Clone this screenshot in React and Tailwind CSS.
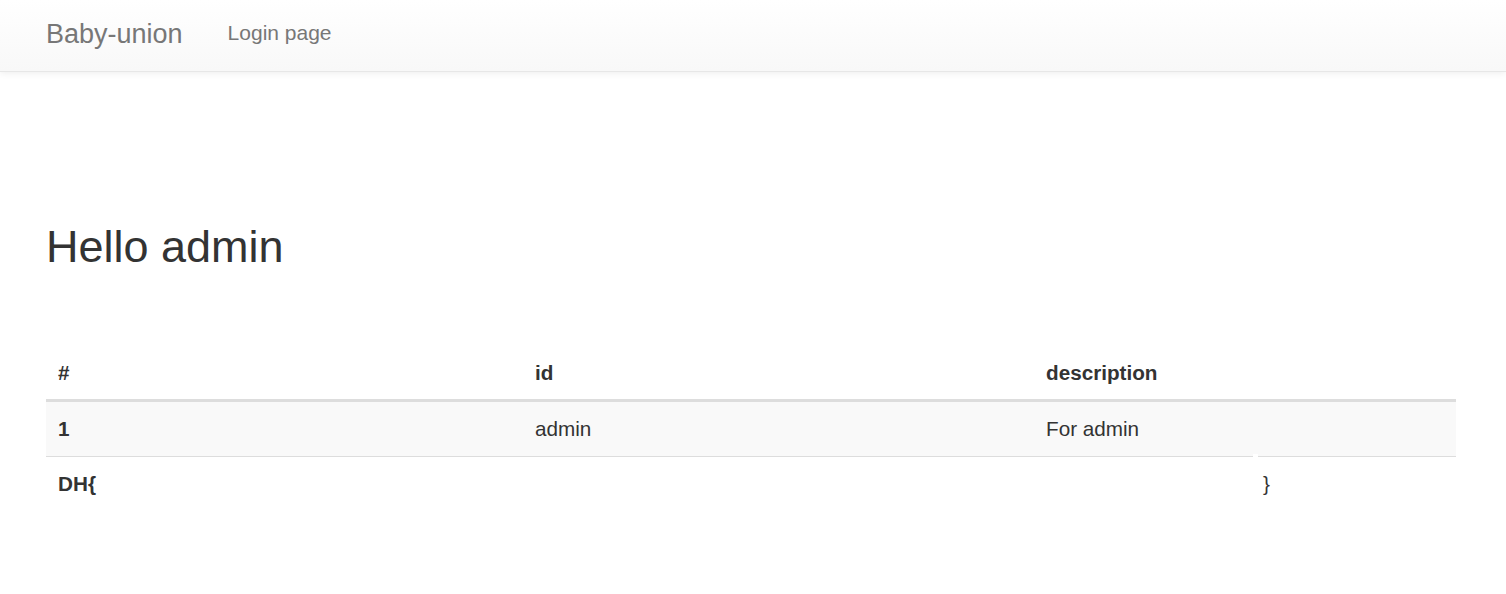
import React from "react";

const rows = [
  { n: "1", id: "admin", desc: "For admin" },
];

export default function App() {
  return (
    <div
      className="min-h-[594px] bg-white text-[#333] text-[20.7px] leading-[28.6px]"
      style={{ fontFamily: '"Liberation Sans", Arial, sans-serif' }}
    >
      <nav className="h-[72px] border-b border-[#e7e7e7] bg-gradient-to-b from-white to-[#f8f8f8] shadow-[0_1px_7px_rgba(0,0,0,0.075)]">
        <div className="flex items-center h-full pl-[25px] pb-[4px]">
          <a className="px-[21px] text-[27px] leading-[28px] text-[#777]">Baby-union</a>
          <a className="px-[24px] text-[21px] text-[#777]">Login page</a>
        </div>
      </nav>

      <div className="pl-[46px] pr-[50px]">
        <h1 className="mt-[150px] mb-[76px] text-[45px] leading-[50px] font-normal">Hello admin</h1>

        <div className="relative">
          <table className="w-full border-collapse">
            <thead>
              <tr>
                <th className="w-[477px] px-[12px] py-[11px] text-left font-bold border-b-[3px] border-[#ddd]">#</th>
                <th className="w-[511px] px-[12px] py-[11px] text-left font-bold border-b-[3px] border-[#ddd]">id</th>
                <th className="px-[12px] py-[11px] text-left font-bold border-b-[3px] border-[#ddd]">description</th>
              </tr>
            </thead>
            <tbody>
              {rows.map((r) => (
                <tr key={r.n} className="bg-[#f9f9f9]">
                  <th className="px-[12px] py-[13px] text-left font-bold border-b border-[#ddd]">{r.n}</th>
                  <td className="px-[12px] py-[13px] border-b border-[#ddd]">{r.id}</td>
                  <td className="px-[12px] py-[13px] border-b border-[#ddd]">{r.desc}</td>
                </tr>
              ))}
              <tr>
                <th className="px-[12px] py-[13px] text-left font-bold">DH{"{"}</th>
                <td className="px-[12px] py-[13px]"></td>
                <td className="px-[12px] py-[13px]">
                  <span className="pl-[217px]">{"}"}</span>
                </td>
              </tr>
            </tbody>
          </table>
          <div className="absolute left-[1207px] top-[106px] w-[5px] h-[4px] bg-white"></div>
        </div>
      </div>
    </div>
  );
}
